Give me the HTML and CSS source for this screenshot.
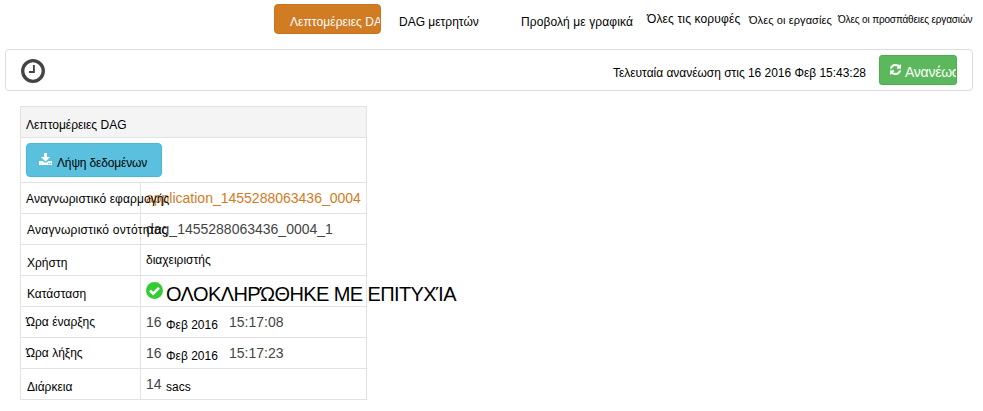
FILE: index.html
```
<!DOCTYPE html>
<html lang="el">
<head>
<meta charset="utf-8">
<title>DAG</title>
<link rel="stylesheet" href="styles.css">
</head>
<body>
<nav class="tabs">
  <a class="tab active"><span class="t-details">Λεπτομέρειες DAG</span></a>
  <a class="tab counters">DAG μετρητών</a>
  <a class="tab graph">Προβολή με γραφικά</a>
  <a class="tab vertices">Όλες τις κορυφές</a>
  <a class="tab tasks">Όλες οι εργασίες</a>
  <a class="tab attempts">Όλες οι προσπάθειες εργασιών</a>
</nav>
<section class="bar">
  <svg class="clock" viewBox="0 0 24 24"><circle cx="12" cy="12" r="10.3" fill="none" stroke="#444" stroke-width="3.3"/><path d="M12.9 6v7H8" fill="none" stroke="#444" stroke-width="1.9"/></svg>
  <span class="updated">Τελευταία ανανέωση στις 16 2016 Φεβ 15:43:28</span>
  <button class="refresh">
    <svg class="sync" viewBox="0 0 1536 1536"><path fill="#fff" stroke="#fff" stroke-width="60" d="M1511 928q0 5-1 7-64 268-268 434.500T764 1536q-146 0-282.500-55T238 1324l-129 129q-19 19-45 19t-45-19-19-45V960q0-26 19-45t45-19h448q26 0 45 19t19 45-19 45l-137 137q71 66 161 102t187 36q134 0 250-65t186-179q11-17 53-117 8-23 30-23h192q13 0 22.500 9.500t9.500 22.500zm25-800v448q0 26-19 45t-45 19h-448q-26 0-45-19t-19-45 19-45l138-138Q969 256 768 256q-134 0-250 65T332 500q-11 17-53 117-8 23-30 23H50q-13 0-22.500-9.500T18 608v-7q65-268 270-434.500T768 0q146 0 284 55.500T1297 212l130-129q19-19 45-19t45 19 19 45z"/></svg>
    <span>Ανανέωση</span>
  </button>
</section>
<main class="details">
  <div class="head"><span class="k-head">Λεπτομέρειες DAG</span></div>
  <div class="action">
    <button class="download">
      <svg class="save" viewBox="0 0 13 12"><path fill="#fff" d="M5 0h3v4h3L6.500 8.500 2 4h3zM0 8h3.500l2 1.500h2L9.500 8H13v4H0z"/><path fill="#5bc0de" d="M9 10h1v1H9zM11 10h1v1h-1z"/></svg>
      <span>Λήψη δεδομένων</span>
    </button>
  </div>
  <div class="row"><div class="key k-app">Αναγνωριστικό εφαρμογής</div><div class="val link">application_1455288063436_0004</div></div>
  <div class="row"><div class="key k-ent">Αναγνωριστικό οντότητας</div><div class="val">dag_1455288063436_0004_1</div></div>
  <div class="row"><div class="key k-user">Χρήστη</div><div class="val user">διαχειριστής</div></div>
  <div class="row"><div class="key k-state">Κατάσταση</div><div class="val state">
    <svg class="check" viewBox="0 0 16 16"><circle cx="8" cy="8" r="8" fill="#3c3"/><path d="M3.800 8l3 3 5.400-5.500" fill="none" stroke="#fff" stroke-width="2.500"/></svg>
    <span>ΟΛΟΚΛΗΡΏΘΗΚΕ ΜΕ ΕΠΙΤΥΧΊΑ</span></div></div>
  <div class="row"><div class="key k-start">Ώρα έναρξης</div><div class="val"><span class="num">16</span><span class="month">Φεβ 2016</span><span>15:17:08</span></div></div>
  <div class="row"><div class="key k-end">Ώρα λήξης</div><div class="val"><span class="num">16</span><span class="month">Φεβ 2016</span><span>15:17:23</span></div></div>
  <div class="row"><div class="key k-dur">Διάρκεια</div><div class="val"><span class="num">14</span><span class="secs">sacs</span></div></div>
</main>
</body>
</html>
```
FILE: styles.css
```
* { box-sizing: border-box; }
body { margin: 0; background: #fff; color: #000; font: 12px/16px "Liberation Sans", Arial, sans-serif; overflow: hidden; }
span, a, .key, .val { white-space: nowrap; }
button { font: inherit; text-align: left; }
.tabs { display: flex; height: 49px; padding: 4px 0 0 274px; }
.tab { flex: none; padding-top: 10px; }
.active { width: 107px; height: 30px; padding: 9px 0 0 15px; border: 1px solid #c87420; border-radius: 4px; background: #d17b23; color: #fff; overflow: hidden; letter-spacing: .07px; }
.counters { width: 122px; margin-left: 18px; }
.graph { width: 126px; letter-spacing: .1px; }
.vertices { width: 102px; padding-top: 7px; letter-spacing: .14px; }
.tasks { width: 89px; padding-top: 8px; font-size: 11px; letter-spacing: .1px; }
.attempts { padding-top: 8px; font-size: 10px; letter-spacing: -.15px; }
.bar { display: flex; width: 968px; height: 42px; margin-left: 5px; padding: 5px 15px 0; border: 1px solid #ddd; border-radius: 4px; }
.clock { width: 24px; height: 24px; margin-top: 4px; }
.updated { width: 266px; margin: 10px 0 0 568px; letter-spacing: -.03px; }
.refresh { display: flex; width: 78px; height: 30px; padding: 0 0 0 10px; border: 1px solid #4cae4c; border-radius: 3px; background: #5cb85c; color: #fff; font-size: 14px; letter-spacing: -.25px; overflow: hidden; }
.sync { flex: none; width: 11px; height: 11px; margin: 8px 4px 0 0; }
.refresh span { padding-top: 8px; }
.details { width: 347px; margin: 15px 0 0 20px; border: 1px solid #e2e2e2; }
.head { height: 30px; padding: 10px 5px 0; background: #f4f4f4; }
.action { height: 45px; padding: 5px; border-top: 1px solid #e2e2e2; }
.download { display: flex; width: 136px; height: 34px; padding: 0 0 0 12px; border: 1px solid #46b8da; border-radius: 4px; background: #5bc0de; letter-spacing: -.15px; }
.save { flex: none; width: 13px; height: 12px; margin: 9px 5px 0 0; }
.download span { padding-top: 11px; }
.row { display: flex; height: 31px; border-top: 1px solid #e2e2e2; }
.key { position: relative; flex: none; width: 120px; padding: 8px 0 0 5px; border-right: 1px solid #e2e2e2; }
.val { display: flex; padding: 7px 0 0 5px; color: #444; font-size: 14px; }
.link { color: #d17b23; }
.user { color: #000; font-size: 12px; }
.k-ent, .k-user, .k-state, .k-dur { padding-left: 6px; }
.k-app { letter-spacing: .1px; }
.k-ent { letter-spacing: .25px; }
.k-user, .k-state, .k-dur { padding-top: 10px; }
.k-start, .k-end { padding-top: 7px; }
.state { padding-top: 6px; color: #000; font-size: 20px; letter-spacing: -.6px; }
.check { flex: none; width: 17px; height: 17px; margin: 0 3px 0 0; }
.state span { padding-top: 1px; line-height: 22px; }
.num { width: 20px; }
.month { width: 63px; padding-top: 3px; color: #000; font-size: 12px; }
.secs { padding-top: 3px; color: #000; font-size: 12px; }
```
